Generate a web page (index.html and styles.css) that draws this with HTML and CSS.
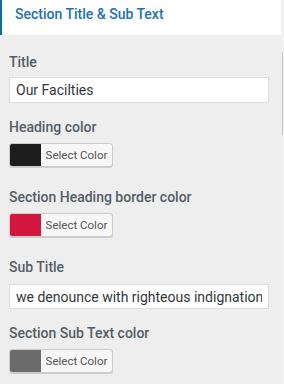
FILE: index.html
```html
<!DOCTYPE html>
<html lang="en">
<head>
    <meta charset="UTF-8">
    <title>Section Title &amp; Sub Text</title>
    <link rel="stylesheet" href="styles.css">
</head>
<body>
    <div class="frame">
        <div class="panel">
            <div class="section-head">Section Title &amp; Sub Text</div>

            <div class="controls">
                <div class="field">
                    <div class="field-label">Title</div>
                    <input class="text-input" type="text" value="Our Facilties">
                </div>

                <div class="field color-field">
                    <div class="field-label">Heading color</div>
                    <button class="color-btn">
                        <span class="swatch" style="background: #1d1d1d"></span>
                        <span class="color-text">Select Color</span>
                    </button>
                </div>

                <div class="field color-field">
                    <div class="field-label">Section Heading border color</div>
                    <button class="color-btn">
                        <span class="swatch" style="background: #d3163d"></span>
                        <span class="color-text">Select Color</span>
                    </button>
                </div>

                <div class="field">
                    <div class="field-label">Sub Title</div>
                    <input class="text-input sub" type="text" value="we denounce with righteous indignation">
                </div>

                <div class="field color-field">
                    <div class="field-label">Section Sub Text color</div>
                    <button class="color-btn">
                        <span class="swatch" style="background: #6b6b6b"></span>
                        <span class="color-text">Select Color</span>
                    </button>
                </div>
            </div>
        </div>

        <div class="scroll-track">
            <div class="scroll-thumb"></div>
        </div>
    </div>
</body>
</html>
```

FILE: styles.css
```css
body {
    margin: 0;
    background: #eeeeee;
    font-family: Roboto, "Liberation Sans", sans-serif;
    overflow: hidden;
}

.frame {
    display: flex;
    height: 384px;
}

.panel {
    width: 281px;
    flex: none;
}

.section-head {
    height: 35px;
    box-sizing: border-box;
    background: #fff;
    border-left: 2px solid #0073aa;
    padding-left: 13px;
    line-height: 29px;
    font-size: 14px;
    font-weight: 500;
    color: #2271b1;
}

.controls {
    padding: 17px 12px 0 9px;
}

.field {
    margin-bottom: 14px;
}

.color-field {
    margin-bottom: 20px;
}

.field-label {
    font-size: 14px;
    line-height: 20px;
    font-weight: 500;
    color: #555d66;
    margin-bottom: 5px;
}

.color-field .field-label {
    margin-bottom: 6px;
}

.text-input {
    display: block;
    width: 100%;
    height: 26px;
    box-sizing: border-box;
    margin: 0;
    border: 1px solid #dddddd;
    background: #fff;
    padding: 0 6px;
    font-family: Roboto, "Liberation Sans", sans-serif;
    font-size: 14px;
    color: #32373c;
    outline: none;
}

.text-input.sub {
    height: 25px;
    margin-top: 7px;
}

.color-btn {
    display: flex;
    width: 104px;
    height: 24px;
    box-sizing: border-box;
    margin: 0;
    padding: 0;
    border: 1px solid #cccccc;
    border-radius: 3px;
    background: #f7f7f7;
    box-shadow: 0 1px 0 #cccccc;
    overflow: hidden;
    cursor: pointer;
}

.swatch {
    width: 31px;
    height: 100%;
    flex: none;
}

.color-text {
    flex: 1;
    line-height: 22px;
    font-family: Roboto, "Liberation Sans", sans-serif;
    font-size: 11.5px;
    color: #555555;
    text-align: center;
}

.scroll-track {
    flex: 1;
    background: #f1f1f1;
    position: relative;
}

.scroll-thumb {
    width: 1px;
    height: 83px;
    margin: 52px 0 0 1px;
    background: #c4c4c4;
}
```
